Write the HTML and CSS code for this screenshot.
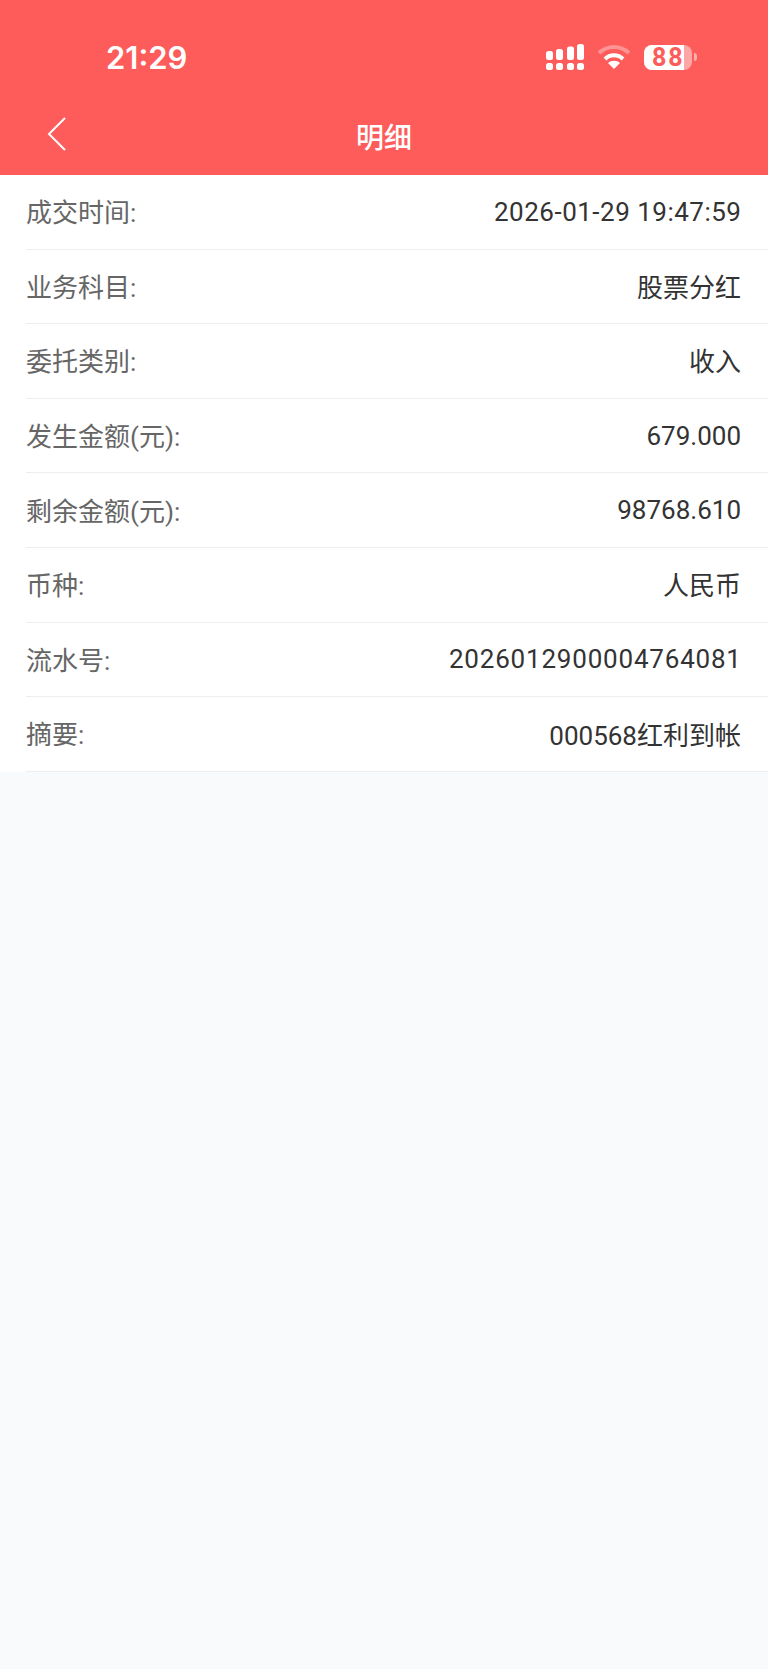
FILE: index.html
```html
<!DOCTYPE html>
<html lang="zh">
<head>
    <meta charset="UTF-8">
    <meta name="viewport" content="width=device-width, initial-scale=1.0">
    <title>明细</title>
    <link rel="stylesheet" href="styles.css">
</head>
<body>
    <div class="header">
        <div class="status-bar">
            <span class="time">21:29</span>
            <div class="status-icons">
                <svg class="signal" width="38" height="26" viewBox="0 0 38 26" fill="#fff">
                    <rect x="0" y="7" width="7" height="9" rx="2.5"/>
                    <rect x="10" y="5" width="7" height="11" rx="2.5"/>
                    <rect x="21" y="2.5" width="7" height="13.5" rx="2.5"/>
                    <rect x="31" y="0" width="7" height="16" rx="2.5"/>
                    <rect x="0" y="19" width="7" height="7" rx="2.5"/>
                    <rect x="10" y="19" width="7" height="7" rx="2.5"/>
                    <rect x="21" y="19" width="7" height="7" rx="2.5"/>
                    <rect x="31" y="19" width="7" height="7" rx="2.5"/>
                </svg>
                <svg class="wifi" width="34" height="26" viewBox="0 0 34 26" fill="none">
                    <path d="M2 9 C11 1 23 1 32 9" stroke="#fff" stroke-opacity=".35" stroke-width="4"/>
                    <path d="M8 15 C13 10 21 10 26 15" stroke="#fff" stroke-width="4"/>
                    <path d="M17 25 L11 19 C14 16 20 16 23 19 Z" fill="#fff"/>
                </svg>
                <div class="battery">
                    <div class="battery-body">
                        <div class="battery-fill"><span>88</span></div>
                    </div>
                    <div class="battery-cap"></div>
                </div>
            </div>
        </div>
        <div class="nav-bar">
            <svg class="back" width="20" height="34" viewBox="0 0 20 34" fill="none" stroke="#fff" stroke-width="2">
                <path d="M18 1 L2 17 L18 33"/>
            </svg>
            <h1>明细</h1>
        </div>
    </div>

    <div class="list">
        <div class="row"><span class="label">成交时间:</span><span class="value value-num value-date">2026-01-29 19:47:59</span></div>
        <div class="row"><span class="label">业务科目:</span><span class="value">股票分红</span></div>
        <div class="row"><span class="label">委托类别:</span><span class="value">收入</span></div>
        <div class="row"><span class="label">发生金额(元):</span><span class="value value-num">679.000</span></div>
        <div class="row"><span class="label">剩余金额(元):</span><span class="value value-num">98768.610</span></div>
        <div class="row"><span class="label">币种:</span><span class="value">人民币</span></div>
        <div class="row"><span class="label">流水号:</span><span class="value value-num value-serial">2026012900004764081</span></div>
        <div class="row"><span class="label">摘要:</span><span class="value value-num">000568红利到帐</span></div>
    </div>
</body>
</html>
```
FILE: styles.css
```css
html, body {
    margin: 0;
    height: 100%;
}
body {
    font-family: Roboto, "Noto Sans CJK SC", sans-serif;
    background-color: #f9fafc;
}
.header {
    height: 175px;
    background-color: #fe5b5b;
    color: white;
}
.status-bar {
    height: 98px;
    display: flex;
    justify-content: space-between;
    align-items: center;
    padding: 16px 71px 0 106px;
    box-sizing: border-box;
}
.time {
    font-family: Inter, sans-serif;
    font-size: 31px;
    font-weight: 600;
}
.status-icons {
    display: flex;
    align-items: center;
    gap: 13px;
}
.battery {
    display: flex;
    align-items: center;
}
.battery-body {
    width: 48px;
    height: 25px;
    border-radius: 8px;
    background-color: rgba(255, 255, 255, 0.45);
}
.battery-fill {
    width: 40px;
    height: 100%;
    padding-left: 8px;
    box-sizing: border-box;
    background-color: white;
    border-radius: 8px 0 0 8px;
    color: #fe5b5b;
    font-size: 25px;
    font-weight: 700;
    letter-spacing: 2px;
    line-height: 25px;
    white-space: nowrap;
}
.battery-cap {
    width: 3px;
    height: 8px;
    margin-left: 2px;
    background-color: rgba(255, 255, 255, 0.5);
    border-radius: 0 3px 3px 0;
}
.nav-bar {
    height: 77px;
    padding-bottom: 2px;
    box-sizing: border-box;
    display: flex;
    align-items: center;
    justify-content: center;
}
.back {
    position: absolute;
    left: 47px;
    top: 117px;
}
h1 {
    margin: 0;
    font-size: 28px;
    font-weight: 500;
}
.list {
    background-color: white;
    padding-left: 26px;
}
.row {
    height: 74.6px;
    box-sizing: border-box;
    display: flex;
    justify-content: space-between;
    align-items: center;
    padding-right: 27px;
    padding-bottom: 2px;
    border-bottom: 1px solid #eeeeee;
    font-size: 26px;
}
.label {
    color: #666;
}
.value {
    color: #333;
}
.value-num {
    padding-top: 2px;
}
.value-date {
    letter-spacing: 0.5px;
    margin-right: -0.5px;
}
.value-serial {
    letter-spacing: 0.8px;
    margin-right: -0.8px;
}
```
